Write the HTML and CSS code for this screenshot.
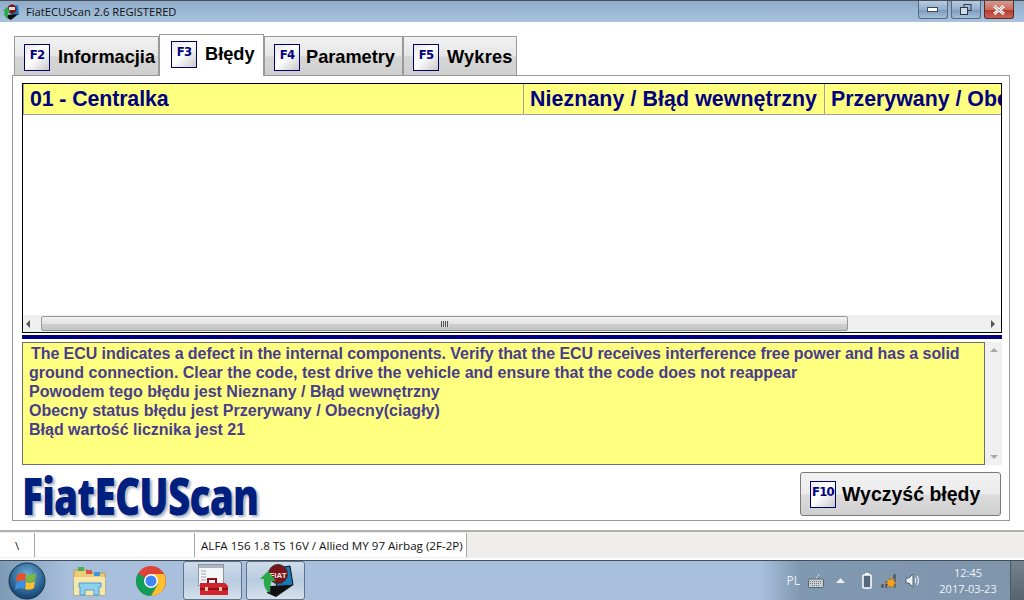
FILE: index.html
```html
<!DOCTYPE html>
<html lang="pl">
<head>
    <meta charset="UTF-8">
    <title>FiatECUScan 2.6 REGISTERED</title>
    <link rel="stylesheet" href="styles.css">
</head>
<body>
    <header class="titlebar">
        <svg class="app-icon" width="18" height="16" viewBox="0 0 18 16">
            <path d="M7 3l9-2 1 10-8 0z" fill="#1978b8"/>
            <path d="M5 11l11-1-2 2-5 4-4-2z" fill="#111"/>
            <circle cx="10" cy="5" r="4.500" fill="#7a1418"/>
            <rect x="7" y="3" width="6" height="3" fill="#e8d8d8"/>
            <path d="M5 3L1 7h1.500c-1 3 0 6 3 7.500l1-6.500h2z" fill="#2aa84a"/>
        </svg>
        <span class="title-text">FiatECUScan 2.6 REGISTERED</span>
        <div class="win-buttons">
            <div class="win-btn">
                <svg width="12" height="6" viewBox="0 0 12 6"><rect x="0.5" y="0.5" width="10" height="4" fill="#fff" stroke="#3a4a5c"/></svg>
            </div>
            <div class="win-btn">
                <svg width="12" height="11" viewBox="0 0 12 11"><rect x="4" y="0.5" width="7" height="6" fill="none" stroke="#2c3a4a"/><rect x="0.5" y="3.5" width="7" height="7" fill="#cfdbe8" stroke="#2c3a4a"/></svg>
            </div>
            <div class="win-btn win-close">
                <svg width="14" height="10" viewBox="0 0 14 10"><path d="M2 1l10 8M12 1L2 9" stroke="#fff" stroke-width="3"/><path d="M2 1l10 8M12 1L2 9" stroke="#5b3a3a" stroke-width=".5"/></svg>
            </div>
        </div>
    </header>

    <main class="app">
        <nav class="tabs">
            <div class="tab tab-1"><span class="fkey">F2</span><span>Informacjia</span></div>
            <div class="tab tab-2 active"><span class="fkey">F3</span><span>Błędy</span></div>
            <div class="tab tab-3"><span class="fkey">F4</span><span>Parametry</span></div>
            <div class="tab tab-4"><span class="fkey">F5</span><span>Wykres</span></div>
        </nav>

        <section class="panel">
            <div class="grid">
                <div class="grid-head">
                    <div class="col col-1">01 - Centralka</div>
                    <div class="col col-2">Nieznany / Błąd wewnętrzny</div>
                    <div class="col col-3">Przerywany / Obecny(ciągły)</div>
                </div>
                <div class="grid-body"></div>
                <div class="hscroll">
                    <span class="arrow arrow-left"></span>
                    <div class="hthumb"><span class="grip"></span></div>
                    <span class="arrow arrow-right"></span>
                </div>
            </div>

            <div class="divider"></div>

            <div class="details">
                <div class="details-text">
                    <p class="first">The ECU indicates a defect in the internal components. Verify that the ECU receives interference free power and has a solid ground connection. Clear the code, test drive the vehicle and ensure that the code does not reappear</p>
                    <p>Powodem tego błędu jest Nieznany / Błąd wewnętrzny</p>
                    <p>Obecny status błędu jest Przerywany / Obecny(ciagły)</p>
                    <p>Błąd wartość licznika jest 21</p>
                </div>
                <div class="vscroll">
                    <span class="arrow arrow-up"></span>
                    <span class="arrow arrow-down"></span>
                </div>
            </div>

            <div class="bottom">
                <div class="logo">FiatECUScan</div>
                <button class="clear-btn"><span class="fkey">F10</span><span>Wyczyść błędy</span></button>
            </div>
        </section>
    </main>

    <div class="statusbar">
        <div class="cell cell-1">\</div>
        <div class="cell cell-2"></div>
        <div class="cell cell-3">ALFA 156 1.8 TS 16V / Allied MY 97 Airbag (2F-2P)</div>
    </div>

    <footer class="taskbar">
        <div class="start">
            <svg width="38" height="38" viewBox="0 0 38 38">
                <defs>
                    <radialGradient id="orb" cx="50%" cy="35%" r="65%">
                        <stop offset="0" stop-color="#6fb4e0"/>
                        <stop offset="1" stop-color="#123f6e"/>
                    </radialGradient>
                </defs>
                <circle cx="19" cy="19" r="18" fill="url(#orb)" stroke="#16324f"/>
                <path d="M9 13c3-2 6-2 9-1l-1 7c-3-1-6-1-9 1z" fill="#e8502a"/>
                <path d="M19 12c3 1 6 1 9-1l-1 7c-3 2-6 2-9 1z" fill="#7cbb3a"/>
                <path d="M8 21c3-2 6-2 9-1l-1 7c-3-1-6-1-9 1z" fill="#3b8fe0"/>
                <path d="M18 20c3 1 6 1 9-1l-1 7c-3 2-6 2-9 1z" fill="#f5c12e"/>
            </svg>
        </div>
        <div class="pin pin-explorer">
            <svg width="34" height="32" viewBox="0 0 34 32">
                <path d="M1 5h14l2 3h15v22H1z" fill="#e9cd78" stroke="#b79a4c"/>
                <rect x="5" y="2" width="6" height="4" fill="#4caf50"/>
                <rect x="13" y="5" width="6" height="4" fill="#d9534f"/>
                <rect x="21" y="7" width="6" height="4" fill="#3c97d8"/>
                <path d="M1 12h31v18H1z" fill="#f6e7ad"/>
                <path d="M6 18h22v4h-2v8h-5v-5h-9v5H7v-8H6z" fill="#8ed0f0" stroke="#4f9cc9"/>
            </svg>
        </div>
        <div class="pin pin-chrome">
            <svg width="30" height="30" viewBox="0 0 30 30">
                <circle cx="15" cy="15" r="15" fill="#db4437"/>
                <path d="M15 15L2 7.5A15 15 0 0 0 15 30l7.5-13z" fill="#0f9d58"/>
                <path d="M15 8h13a15 15 0 0 1-13 22l7-12z" fill="#fbc02d"/>
                <circle cx="15" cy="15" r="7" fill="#fff"/>
                <circle cx="15" cy="15" r="5.5" fill="#4285f4"/>
            </svg>
        </div>
        <div class="task-btn task-toolbox">
            <svg width="32" height="35" viewBox="0 0 32 35">
                <rect x="1.500" y="1.500" width="25" height="21" fill="#f4f6f8" stroke="#8a95a0"/>
                <rect x="2" y="2" width="24" height="3" fill="#aab6c2"/>
                <path d="M4 8h5M4 11h5M4 14h5M4 17h5" stroke="#9aa4ae"/>
                <path d="M11 20v-4h8v4" fill="none" stroke="#8d1119" stroke-width="2"/>
                <path d="M3 20h25l3 3v9H3z" fill="#d2232c"/>
                <rect x="3" y="25" width="28" height="2" fill="#8d1119"/>
                <rect x="8" y="24" width="3" height="4" fill="#e8c9a0"/>
                <rect x="22" y="24" width="3" height="4" fill="#e8c9a0"/>
            </svg>
        </div>
        <div class="task-btn task-fiat">
            <svg width="36" height="34" viewBox="0 0 36 34">
                <path d="M14 5l18-3 3 19-16 2z" fill="#1978b8" stroke="#111"/>
                <path d="M12 22l23-1-4 3-13 9-9-4z" fill="#111"/>
                <circle cx="20" cy="10" r="9.500" fill="#7a1418" stroke="#333"/>
                <text class="fiat-badge" x="20" y="14" text-anchor="middle">FIAT</text>
                <path d="M10 7L2 15h4c-1 6 1 11 6 14l1-12h5z" fill="#2aa84a"/>
            </svg>
        </div>
        <div class="tray">
            <span class="lang">PL</span>
            <svg width="16" height="14" viewBox="0 0 16 14"><path d="M11 0c0 3-3 2-3 5" fill="none" stroke="#d8e0e8"/><rect x="0.5" y="5" width="15" height="8.5" rx="1" fill="#c9ced4" stroke="#566"/><path d="M2 7.500h12M2 9.500h12M4 11.500h8" stroke="#6f7780" stroke-dasharray="1 1"/></svg>
            <svg class="tray-arrow" width="9" height="5" viewBox="0 0 9 5"><path d="M0 5l4.500-5L9 5z" fill="#e8eef4"/></svg>
            <svg class="tray-battery" width="10" height="16" viewBox="0 0 10 16"><rect x="3" y="0" width="4" height="2" fill="#fff"/><rect x="1" y="2" width="8" height="13" rx="1" fill="#55677a" stroke="#fff" stroke-width="1.500"/></svg>
            <svg class="tray-signal" width="16" height="14" viewBox="0 0 16 14"><path d="M0 10h3v4H0zM4 7h3v7H4zM8 4h3v10H8zM12 0h3v14h-3z" fill="#4a5560" stroke="#8d98a3" stroke-width=".5"/><circle cx="10" cy="9" r="3.500" fill="#f5a01e"/><path d="M10 3v12M4 9h12M6 5l8 8M14 5l-8 8" stroke="#f5a01e"/></svg>
            <svg class="tray-speaker" width="15" height="15" viewBox="0 0 15 15"><path d="M1 5h3l4-4v13l-4-4H1z" fill="#eef2f6" stroke="#5a6672"/><path d="M10 5c1 2 1 3 0 5M12 3c2 3 2 6 0 9" fill="none" stroke="#e6ecf2" stroke-width="1.200"/></svg>
            <div class="clock"><span>12:45</span><span>2017-03-23</span></div>
            <div class="show-desktop"></div>
        </div>
    </footer>
</body>
</html>
```
FILE: styles.css
```css
* {
    box-sizing: border-box;
}

html, body {
    margin: 0;
    padding: 0;
}

body {
    width: 1024px;
    height: 600px;
    overflow: hidden;
    display: flex;
    flex-direction: column;
    background: #fff;
    font-family: 'Liberation Sans', Arial, sans-serif;
}

/* title bar */
.titlebar {
    height: 22px;
    display: flex;
    align-items: center;
    padding-left: 2px;
    border-top: 1px solid #4a4f55;
    background: linear-gradient(180deg, #8eabc9 0%, #a9c3de 100%);
}

.app-icon {
    margin-right: 6px;
}

.title-text {
    font-family: 'Open Sans', sans-serif;
    font-size: 11.200px;
    color: #111;
}

.win-buttons {
    margin-left: auto;
    margin-right: 10px;
    align-self: flex-start;
    display: flex;
    gap: 3px;
}

.win-btn {
    width: 30px;
    height: 18px;
    display: flex;
    align-items: center;
    justify-content: center;
    border: 1px solid #56697e;
    border-top: 0;
    border-radius: 0 0 3px 3px;
    background: linear-gradient(180deg, #b5cbe2 0%, #93aeca 50%, #7b99b9 52%, #a6bed8 100%);
}

.win-close {
    width: 30px;
    border-color: #5c2a28;
    background: linear-gradient(180deg, #d99a90 0%, #c96a5c 50%, #b2382a 52%, #c9645a 100%);
}

/* main window */
.app {
    height: 508px;
    padding: 12px 14px 0 12px;
    display: flex;
    flex-direction: column;
}

.tabs {
    height: 41px;
    display: flex;
    align-items: flex-end;
    padding-left: 2px;
}

.tab {
    height: 39px;
    display: flex;
    align-items: center;
    gap: 8px;
    padding: 3px 0 0 9px;
    border: 1px solid #999;
    border-bottom: 0;
    background: linear-gradient(180deg, #f2f2f2 0%, #e6e6e6 50%, #d6d6d6 52%, #cfcfcf 100%);
    font-size: 18.200px;
    font-weight: bold;
    color: #000;
    white-space: nowrap;
}

.tab-1 { width: 145px; }
.tab-2 { width: 105px; }
.tab-3 { width: 139px; gap: 6px; }
.tab-4 { width: 114px; letter-spacing: .2px; }

.tab.active {
    height: 42px;
    margin-bottom: -1px;
    padding: 0 0 3px 11px;
    background: #fff;
    position: relative;
    z-index: 1;
}

.fkey {
    flex: none;
    width: 26px;
    height: 27px;
    display: flex;
    align-items: flex-start;
    justify-content: center;
    padding-top: 2px;
    border: 1px solid #000066;
    background: linear-gradient(135deg, #e8e8e8 0%, #fff 45%, #c9c9c9 100%);
    font-family: 'DejaVu Sans Condensed', 'DejaVu Sans', sans-serif;
    font-size: 13px;
    font-weight: bold;
    letter-spacing: -.8px;
    color: #000080;
}

.panel {
    width: 998px;
    height: 446px;
    padding: 7px 7px 0 9px;
    border: 1px solid #999;
    display: flex;
    flex-direction: column;
}

/* fault grid */
.grid {
    height: 250px;
    flex: none;
    display: flex;
    flex-direction: column;
    border: 1px solid #000;
}

.grid-head {
    height: 31px;
    flex: none;
    display: flex;
    overflow: hidden;
    background: #ffff80;
    border: 1px solid #a0a0a0;
    border-width: 0 0 1px 1px;
}

.col {
    flex: none;
    height: 100%;
    padding: 1px 5px 0 6px;
    display: flex;
    align-items: center;
    border-right: 1px solid #a0a0a0;
    font-size: 21.330px;
    font-weight: bold;
    color: #000080;
    white-space: nowrap;
}

.col-1 { width: 500px; letter-spacing: -.1px; }
.col-2 { width: 301px; letter-spacing: .1px; }
.col-3 { width: 320px; }

.grid-body {
    flex: 1;
    background: #fff;
}

.hscroll {
    height: 17px;
    flex: none;
    display: flex;
    align-items: center;
    background: #f0f0f0;
    padding: 0 3px;
}

.hthumb {
    width: 807px;
    height: 15px;
    margin-left: 11px;
    display: flex;
    align-items: center;
    justify-content: center;
    border: 1px solid #979797;
    border-radius: 2px;
    background: linear-gradient(180deg, #f2f2f2 0%, #e2e2e2 50%, #cfcfcf 52%, #c4c4c4 100%);
}

.grip {
    width: 8px;
    height: 6px;
    background: repeating-linear-gradient(90deg, #555 0, #555 1px, #ddd 1px, #ddd 2px);
}

.arrow {
    flex: none;
    width: 0;
    height: 0;
    border-style: solid;
}

.arrow-left {
    border-width: 4px 4px 4px 0;
    border-color: transparent #555 transparent transparent;
}

.arrow-right {
    margin-left: auto;
    margin-right: 3px;
    border-width: 4px 0 4px 4px;
    border-color: transparent transparent transparent #555;
}

.arrow-up {
    border-width: 0 4px 4px;
    border-color: transparent transparent #a8a8a8;
}

.arrow-down {
    border-width: 4px 4px 0;
    border-color: #a8a8a8 transparent transparent;
}

.divider {
    height: 4px;
    flex: none;
    margin-top: 2px;
    background: #000080;
}

/* description box */
.details {
    height: 123px;
    flex: none;
    margin-top: 3px;
    display: flex;
}

.details-text {
    flex: 1;
    padding: 1px 6px 0 6px;
    background: #ffff80;
    border: 1px solid #6e6e6e;
    font-size: 16px;
    font-weight: bold;
    line-height: 19px;
    color: #483d8b;
}

.details-text p {
    margin: 0;
}

.details-text .first {
    text-indent: 2px;
}

.details-text .first::first-line {
    letter-spacing: -.07px;
}

.vscroll {
    width: 17px;
    flex: none;
    display: flex;
    flex-direction: column;
    align-items: center;
    justify-content: space-between;
    padding: 6px 0;
    background: #f0f0f0;
}

.bottom {
    flex: 1;
    display: flex;
    align-items: flex-start;
    justify-content: space-between;
    padding-right: 1px;
}

.logo {
    font-family: 'Open Sans', 'Liberation Sans', sans-serif;
    font-size: 51px;
    font-weight: 800;
    line-height: 60px;
    letter-spacing: -1px;
    color: #00207f;
    text-shadow: 3px 2px 3px #a9b0c0;
    transform: scaleX(.76);
    transform-origin: left center;
}

.clear-btn {
    width: 201px;
    height: 44px;
    margin-top: 7px;
    padding: 0 0 0 9px;
    display: flex;
    align-items: center;
    gap: 6px;
    border: 1px solid #7a7a7a;
    border-radius: 3px;
    background: linear-gradient(180deg, #f2f2f2 0%, #ebebeb 50%, #dcdcdc 52%, #cfcfcf 100%);
    font-family: 'Liberation Sans', Arial, sans-serif;
    font-size: 19.500px;
    font-weight: bold;
    color: #000;
}

/* status bar */
.statusbar {
    height: 30px;
    flex: none;
    display: flex;
    align-items: center;
    border-top: 2px solid #b0b0b0;
    border-bottom: 2px solid #fff;
    background: #f0eded;
    font-family: 'Open Sans', sans-serif;
    font-size: 11.600px;
    color: #111;
}

.cell {
    height: 24px;
    display: flex;
    align-items: center;
    background: #fff;
    border-right: 1px solid #a8a8a8;
    white-space: nowrap;
}

.cell-1 { width: 35px; padding-left: 15px; }
.cell-2 { width: 160px; }
.cell-3 { width: 272px; padding-left: 6px; }

/* taskbar */
.taskbar {
    height: 40px;
    flex: none;
    display: flex;
    align-items: center;
    border-top: 1px solid #3f4d5c;
    background: linear-gradient(90deg, #7f9ab5 0, #a8c0dc 70px, #a8c0dc 760px, #8098b0 800px, #7f96ad 100%);
}

.start {
    width: 38px;
    margin-left: 8px;
    display: flex;
}

.pin {
    flex: none;
    display: flex;
}

.pin-explorer {
    margin-left: 27px;
}

.pin-chrome {
    margin-left: 29px;
}

.task-btn {
    flex: none;
    width: 59px;
    height: 39px;
    display: flex;
    align-items: center;
    justify-content: center;
    border: 1px solid #5e738a;
    border-radius: 3px;
    background: linear-gradient(180deg, #cfdcea 0%, #b9cce0 50%, #d5e0ec 100%);
}

.task-toolbox {
    margin-left: 17px;
}

.task-fiat {
    margin-left: 4px;
}

.fiat-badge {
    font-family: 'Liberation Sans', sans-serif;
    font-size: 8px;
    font-weight: bold;
    fill: #f0e4e4;
}

.tray {
    margin-left: auto;
    height: 100%;
    display: flex;
    align-items: center;
    color: #e8eef4;
}

.lang {
    font-family: 'Open Sans', sans-serif;
    font-size: 12px;
    margin-right: 8px;
}

.tray-arrow { margin-left: 12px; }
.tray-battery { margin-left: 17px; }
.tray-signal { margin-left: 9px; }
.tray-speaker { margin-left: 8px; }

.clock {
    width: 74px;
    margin-left: 11px;
    display: flex;
    flex-direction: column;
    align-items: center;
    gap: 3px;
    font-family: 'Open Sans', sans-serif;
    font-size: 11px;
    line-height: 13px;
    color: #eef3f8;
}

.show-desktop {
    width: 14px;
    height: 100%;
    margin-left: 5px;
    border-left: 1px solid #4c5a68;
    background: linear-gradient(180deg, #75838f 0%, #56646f 100%);
}
```
